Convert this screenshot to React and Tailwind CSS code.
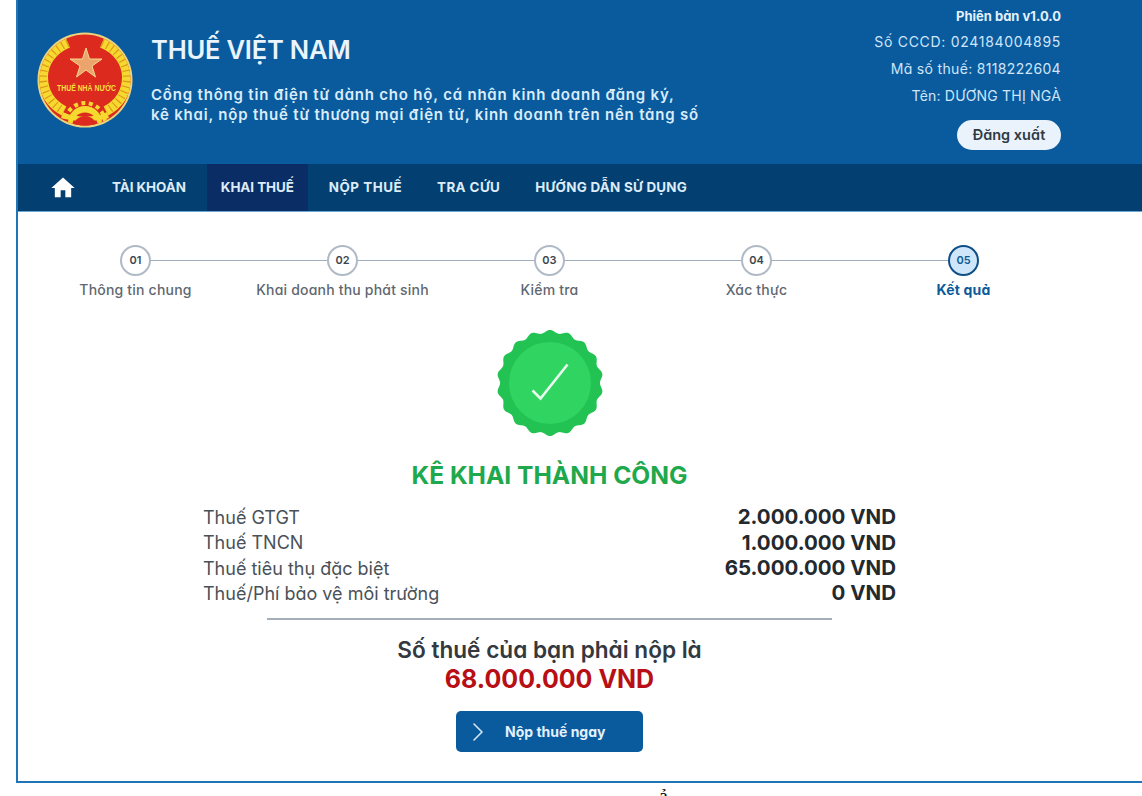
import { ChevronRight } from 'lucide-react'

const font = "[font-family:Inter,'Noto_Sans',sans-serif] [font-feature-settings:'cv11']"

const navItems = [
    { label: 'TÀI KHOẢN', spacing: 'tracking-[-0.05px]' },
    { label: 'KHAI THUẾ', spacing: 'tracking-[-0.05px]', active: true },
    { label: 'NỘP THUẾ', spacing: 'tracking-[0.5px]' },
    { label: 'TRA CỨU', spacing: 'tracking-[0.4px]' },
    { label: 'HƯỚNG DẪN SỬ DỤNG', spacing: 'tracking-[0.25px]' },
]

const steps = [
    { no: '01', label: 'Thông tin chung' },
    { no: '02', label: 'Khai doanh thu phát sinh' },
    { no: '03', label: 'Kiểm tra' },
    { no: '04', label: 'Xác thực' },
    { no: '05', label: 'Kết quả', done: true },
]

const taxes = [
    { name: 'Thuế GTGT', value: '2.000.000 VND' },
    { name: 'Thuế TNCN', value: '1.000.000 VND' },
    { name: 'Thuế tiêu thụ đặc biệt', value: '65.000.000 VND' },
    { name: 'Thuế/Phí bảo vệ môi trường', value: '0 VND' },
]

// Wavy edge of the success badge
const scallop = Array.from({ length: 288 }, (_, i) => {
    const a = (i / 288) * Math.PI * 2
    const r = 51.5 + 1.6 * Math.cos(a * 18)
    return `${(55 + r * Math.sin(a)).toFixed(2)},${(55 - r * Math.cos(a)).toFixed(2)}`
}).join(' ')

const Wheat = ({ flip }) => (
    <g transform={flip ? 'translate(96 0) scale(-1 1)' : undefined}>
        <path d="M31 11 C14 18 6 32 6 45 C6 60 14 72 27 79" fill="none" stroke="#f6d92f" strokeWidth="10" />
        <path d="M31 11 C14 18 6 32 6 45 C6 60 14 72 27 79" fill="none" stroke="#e0951c" strokeWidth="8" strokeDasharray="1.2 4.2" />
    </g>
)

const Logo = () => (
    <svg viewBox="0 0 96 96" className="w-[96px] h-[96px] shrink-0">
        <defs>
            <clipPath id="logo-clip">
                <circle cx="48" cy="48" r="45.5" />
            </clipPath>
        </defs>
        <circle cx="48" cy="48" r="47.5" fill="#ecd47e" />
        <circle cx="48" cy="48" r="45.5" fill="#dd2a1f" />
        <g clipPath="url(#logo-clip)">
            <Wheat />
            <Wheat flip />
            <circle cx="48" cy="91" r="20" fill="none" stroke="#f6d92f" strokeWidth="4" strokeDasharray="4 3.5" />
            <circle cx="48" cy="91" r="17" fill="#f6d92f" />
            <circle cx="48" cy="93" r="12.5" fill="#dd2a1f" />
            <path d="M26 80 C36 86 60 86 70 80 L72 86 C60 90 36 90 24 86Z" fill="#f6d92f" />
            <circle cx="48" cy="96" r="12" fill="#dd2a1f" />
        </g>
        <polygon
            points="49,16 52.5,27 65,27 55,34 58.5,45 49,38 39.5,45 43,34 33,27 45.5,27"
            fill="#eba56c"
            stroke="#f6d78e"
            strokeWidth="1"
        />
        <text x="49.5" y="59" textAnchor="middle" fontSize="9" fontWeight="800" fill="#f8de3c" fontFamily="'Liberation Sans', sans-serif" textLength="59" lengthAdjust="spacingAndGlyphs">
            THUẾ NHÀ NƯỚC
        </text>
    </svg>
)

const Badge = () => (
    <svg viewBox="0 0 110 110" className="w-[110px] h-[110px]">
        <polygon points={scallop} fill="#22c253" />
        <circle cx="55" cy="55" r="41" fill="#30d561" />
        <path d="M37.5 62.5 L45.5 70.5 L72.5 36.5" fill="none" stroke="#e9fbef" strokeWidth="2.6" />
    </svg>
)

const Step = ({ no, label, done, last }) => (
    <div className="relative flex flex-col items-center w-[207px]">
        {!last && <div className="absolute top-[15px] left-[103px] w-[207px] h-px bg-[#9fadbd]" />}
        <div
            className={`relative z-10 w-[31px] h-[31px] rounded-full flex items-center justify-center text-[11px] font-semibold border-2 ${
                done ? 'bg-[#cfe6fa] border-[#0d4f86] text-[#0d5a99]' : 'bg-white border-[#b0bac6] text-[#3c4650]'
            }`}
        >
            {no}
        </div>
        <div className={`mt-[4px] text-[14px] leading-[20px] tracking-[0.2px] whitespace-nowrap ${done ? 'font-bold text-[#0d5a99]' : 'font-medium text-[#5f6770]'}`}>
            {label}
        </div>
    </div>
)

export default function App() {
    return (
        <div className={`${font} relative w-[1142px] h-[796px] overflow-hidden bg-white pl-4`}>
            <div className="h-[783px] flex flex-col border-l-2 border-b-2 border-[#1f75b5]">
                {/* Header */}
                <header className="h-[164px] bg-[#0a5a9e] flex items-start pl-[19px] pr-[81px] shrink-0">
                    <div className="mt-[32px]">
                        <Logo />
                    </div>
                    <div className="ml-[18px] mt-[33px] flex-1 text-[#eaf4fc]">
                        <h1 className="text-[25.5px] leading-[34px] font-semibold tracking-[-0.2px]">THUẾ VIỆT NAM</h1>
                        <p className="mt-[18px] text-[15px] leading-[20px] tracking-[0.8px] font-semibold text-[#d9ecfa] whitespace-nowrap">
                            Cổng thông tin điện tử dành cho hộ, cá nhân kinh doanh đăng ký,
                            <br />
                            kê khai, nộp thuế từ thương mại điện tử, kinh doanh trên nền tảng số
                        </p>
                    </div>
                    <div className="flex flex-col items-end pt-[4px] text-[14px] text-[#cfe6f9]">
                        <div className="leading-[24px] text-[13px] font-bold text-[#e3f1fc]">Phiên bản v1.0.0</div>
                        <div className="leading-[27px] tracking-[0.7px]">Số CCCD: 024184004895</div>
                        <div className="leading-[27px] tracking-[0.33px]">Mã số thuế: 8118222604</div>
                        <div className="leading-[27px] tracking-[0.2px]">Tên: DƯƠNG THỊ NGÀ</div>
                        <button className="mt-[11px] w-[104px] h-[30px] rounded-full bg-[#eaf3fb] text-[14.5px] font-semibold text-[#2f3a45]">
                            Đăng xuất
                        </button>
                    </div>
                </header>

                {/* Nav */}
                <nav className="h-[48px] bg-[#033f70] border-b border-[#6fa6cf] flex items-stretch pl-[31px] shrink-0">
                    <div className="w-[28px] flex items-center justify-center mr-[21px]">
                        <svg viewBox="0 0 24 24" className="w-[28px] h-[28px]" fill="white">
                            <path d="M10 20v-6h4v6h5v-8h3L12 3 2 12h3v8z" />
                        </svg>
                    </div>
                    <div className="flex items-stretch gap-[7px]">
                        {navItems.map(item => (
                            <a
                                key={item.label}
                                className={`px-[14px] flex items-center text-[13.4px] font-bold text-[#dcecf8] whitespace-nowrap ${item.spacing} ${
                                    item.active ? 'bg-[#0b2d66]' : ''
                                }`}
                            >
                                {item.label}
                            </a>
                        ))}
                    </div>
                </nav>

                {/* Steps */}
                <main className="flex-1 flex flex-col">
                    <div className="flex pl-[14px] pt-[33px]">
                        {steps.map((s, i) => (
                            <Step key={s.no} {...s} last={i === steps.length - 1} />
                        ))}
                    </div>

                    <div className="w-[1063px] flex flex-col items-center">
                        <div className="mt-[28px]">
                            <Badge />
                        </div>
                        <h2 className="mt-[21px] text-[24.6px] leading-[32px] font-bold text-[#1fa84c]">KÊ KHAI THÀNH CÔNG</h2>

                        <div className="mt-[14px] w-[693px]">
                            {taxes.map(t => (
                                <div key={t.name} className="flex justify-between items-center h-[25.3px]">
                                    <span className="text-[18px] text-[#4a5158]">{t.name}</span>
                                    <span className="text-[20.5px] font-bold text-[#24292e]">{t.value}</span>
                                </div>
                            ))}
                        </div>

                        <div className="mt-[12px] w-[565px] h-[2px] bg-[#a4afbb]" />

                        <div className="mt-[16px] text-[22.6px] leading-[28px] font-semibold text-[#33393f]">Số thuế của bạn phải nộp là</div>
                        <div className="text-[25px] leading-[30px] font-bold text-[#b70f15]">68.000.000 VND</div>

                        <button className="mt-[17px] w-[187px] h-[41px] rounded-[5px] bg-[#0a5a9e] flex items-center pl-[6px] text-white">
                            <ChevronRight className="w-[32px] h-[32px] mr-[11px] text-[#d6e8f7]" strokeWidth={1.2} />
                            <span className="text-[14px] font-bold text-[#e3f1fc]">Nộp thuế ngay</span>
                        </button>
                    </div>
                </main>
            </div>

            {/* Top of the next line of the page, cut off by the window */}
            <div className="[font-family:'Liberation_Serif',serif] ml-[643px] mt-[2px] text-[20px] leading-[22px] text-black">ả</div>
        </div>
    )
}
